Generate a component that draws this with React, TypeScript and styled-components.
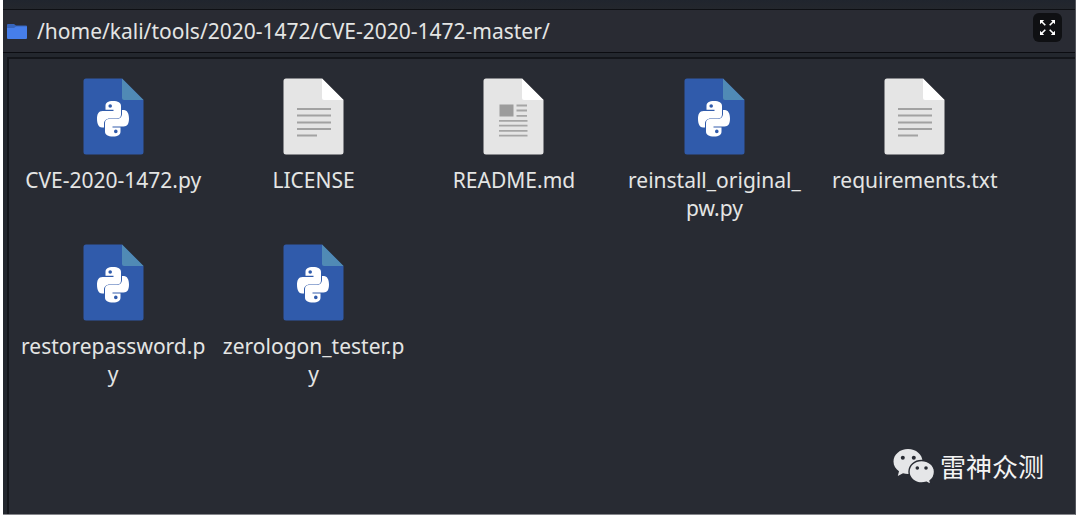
import React from "react";
import styled, { createGlobalStyle } from "styled-components";

const GlobalStyle = createGlobalStyle`
  * { box-sizing: border-box; }
  body {
    margin: 0;
    background: #ffffff;
    font-family: "Noto Sans", "Noto Sans CJK SC", sans-serif;
  }
`;

const Page = styled.div`
  display: flex;
  min-height: 100vh;
  padding: 0 4px 1px 3px;
`;

const Window = styled.main`
  position: relative;
  flex: 1;
  display: flex;
  flex-direction: column;
  min-width: 0;
  background: #23272e;
  border-bottom: 1px solid #85868b;
  border-right: 1px solid #54565d;
`;

const TopStrip = styled.div`
  height: 9px;
  background: linear-gradient(#20252e, #24272d);
`;

const LocationBar = styled.header`
  display: flex;
  align-items: center;
  gap: 10px;
  height: 44px;
  padding: 0 13px 0 4px;
  background: #292b33;
  border-top: 1px solid #0e1014;
  border-bottom: 1px solid #0b0c11;
`;

const LocationInput = styled.input`
  flex: 1;
  min-width: 0;
  height: 28px;
  padding: 0;
  border: 0;
  outline: 0;
  background: transparent;
  color: #e4e5e4;
  font-family: inherit;
  font-size: 21px;
`;

const ExpandButton = styled.button`
  display: grid;
  place-items: center;
  width: 29px;
  height: 29px;
  margin-bottom: 8px;
  padding: 0;
  border: 0;
  border-radius: 6px;
  background: #0f1013;
  color: #ffffff;
`;

const Pane = styled.section`
  flex: 1;
  margin: 4px 0 0 4px;
  padding: 19px 60px 20px 4px;
  background: #282b33;
  border-top: 2px solid #14161b;
  border-left: 2px solid #14161b;
`;

const FileGrid = styled.ul`
  display: grid;
  grid-template-columns: repeat(auto-fill, minmax(190px, 1fr));
  row-gap: 22px;
  margin: 0;
  padding: 0;
  list-style: none;
`;

const FileItem = styled.li`
  display: flex;
  flex-direction: column;
  align-items: center;
  gap: 11px;
`;

const FileName = styled.span`
  max-width: 185px;
  color: #e4e5e4;
  font-size: 21px;
  line-height: 28px;
  text-align: center;
  word-break: break-all;
`;

const SheetArt = styled.svg`
  display: block;
  width: 61px;
  height: 77px;
`;

const Brand = styled.aside`
  position: absolute;
  right: 31px;
  bottom: 29px;
  display: flex;
  align-items: center;
  gap: 5px;
  color: #f4f4f4;
  font-family: "Noto Sans CJK SC", sans-serif;
  font-size: 26px;
  line-height: 38px;
`;

type Kind = "python" | "text" | "readme";

const files: { name: string; kind: Kind }[] = [
  { name: "CVE-2020-1472.py", kind: "python" },
  { name: "LICENSE", kind: "text" },
  { name: "README.md", kind: "readme" },
  { name: "reinstall_original_pw.py", kind: "python" },
  { name: "requirements.txt", kind: "text" },
  { name: "restorepassword.py", kind: "python" },
  { name: "zerologon_tester.py", kind: "python" },
];

const snake =
  "M16 0C11 0 8.500 1.500 8.500 5V8.800H16.500V10H5.500C1.500 10 0 13 0 18S2 26.500 5 26.500H7V22.500C7 19.500 9.500 17.400 12.500 17.400H20C22.500 17.400 24 16 24 13.500V5C24 1.500 21 0 16 0ZM13.200 3.200A1.800 1.800 0 1 1 13.200 6.800A1.800 1.800 0 1 1 13.200 3.200Z";

function FileIcon({ kind }: { kind: Kind }) {
  const code = kind === "python";
  return (
    <SheetArt viewBox="0 0 61 77" aria-hidden="true">
      <path
        d="M3 .5H39L60.5 22V74a2.500 2.500 0 0 1-2.500 2.500H3A2.500 2.500 0 0 1 .5 74V3A2.500 2.500 0 0 1 3 .5Z"
        fill={code ? "#305bab" : "#e5e5e5"}
      />
      <path d="M39 .5L60.500 22H41a2 2 0 0 1-2-2Z" fill={code ? "#508ab5" : "#ffffff"} />
      {code && (
        <g transform="translate(14 23)" fill="#ffffff" fillRule="evenodd">
          <path d={snake} />
          <path d={snake} transform="rotate(180 16 17.700)" />
        </g>
      )}
      {kind === "text" && (
        <path
          d="M14 31H48M14 37.500H48M14 44.500H48M14 51H48M14 57.500H34"
          stroke="#a2a2a2"
          strokeWidth="1.800"
        />
      )}
      {kind === "readme" && (
        <>
          <rect x="16.500" y="26.500" width="14" height="12" fill="#9c9c9c" />
          <path
            d="M33.500 27.500H44M33.500 32.500H44M33.500 37.800H44M16 42.800H44.500M16 47.700H44.500M16 52.800H44.500M16 57.700H44.500"
            stroke="#a5a5a5"
            strokeWidth="1.800"
          />
        </>
      )}
    </SheetArt>
  );
}

export default function App() {
  return (
    <>
      <GlobalStyle />
      <Page>
        <Window>
          <TopStrip />
          <LocationBar>
            <svg width="20" height="15" viewBox="0 0 20 15" aria-hidden="true">
              <path d="M0 1Q0 0 1 0H7L9 1.500H19Q20 1.500 20 2.500V8H0Z" fill="#3765bd" />
              <path d="M0 4H7L9 2.500H20V14Q20 15 19 15H1Q0 15 0 14Z" fill="#467eea" />
            </svg>
            <LocationInput
              aria-label="Location"
              defaultValue="/home/kali/tools/2020-1472/CVE-2020-1472-master/"
              spellCheck={false}
            />
            <ExpandButton type="button" aria-label="Expand">
              <svg width="17" height="17" viewBox="0 0 17 17" fill="currentColor">
                <path d="M1 1H5.200L1 5.200ZM16 1V5.200L11.800 1ZM1 16V11.800L5.200 16ZM16 16H11.800L16 11.800Z" />
                <path
                  d="M2.500 2.500L6.300 6.300M14.500 2.500L10.700 6.300M2.500 14.500L6.300 10.700M14.500 14.500L10.700 10.700"
                  stroke="currentColor"
                  strokeWidth="1.600"
                />
              </svg>
            </ExpandButton>
          </LocationBar>
          <Pane>
            <FileGrid>
              {files.map((file) => (
                <FileItem key={file.name}>
                  <FileIcon kind={file.kind} />
                  <FileName>{file.name}</FileName>
                </FileItem>
              ))}
            </FileGrid>
          </Pane>
          <Brand>
            <svg width="42" height="37" viewBox="0 0 42 37" aria-hidden="true">
              <path
                d="M15 1C7 1 .5 6.500 .5 13.500C.5 17.500 2.600 21 6 23.300L4.800 28L10 25.200Q12.500 26 15 26C23 26 29.500 20.500 29.500 13.500S23 1 15 1Z"
                fill="#e5e6e8"
              />
              <path
                d="M28.500 12.500C21.500 12.500 16 17.500 16 23.700S21.500 35 28.500 35Q31 35 33.500 34.200L38 36.500L37 32.800C39.700 30.800 41.500 27.500 41.500 23.700C41.500 17.500 35.500 12.500 28.500 12.500Z"
                fill="#e5e6e8"
                stroke="#282b33"
                strokeWidth="1.400"
              />
              <g fill="#282b33">
                <circle cx="9.800" cy="9.700" r="2" />
                <circle cx="20.800" cy="9.700" r="2" />
                <circle cx="24.300" cy="20" r="1.800" />
                <circle cx="33" cy="20" r="1.800" />
              </g>
            </svg>
            <span>雷神众测</span>
          </Brand>
        </Window>
      </Page>
    </>
  );
}
